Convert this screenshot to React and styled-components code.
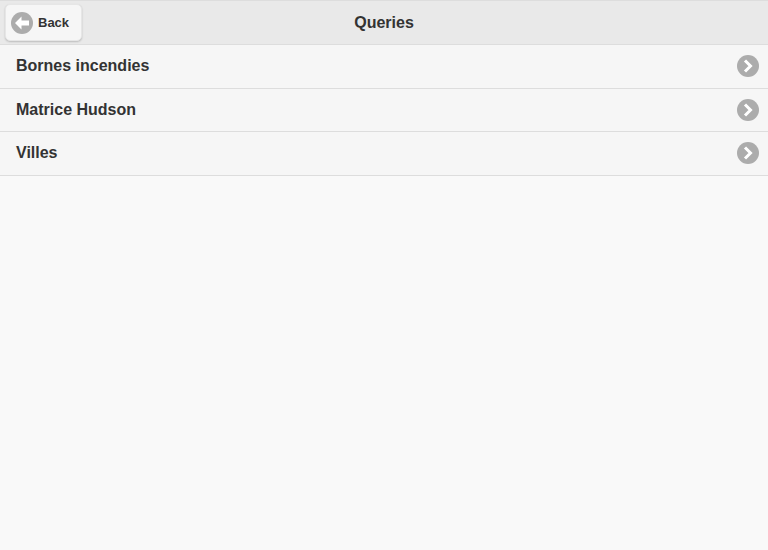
import React from "react";
import styled, { createGlobalStyle } from "styled-components";

const queries = ["Bornes incendies", "Matrice Hudson", "Villes"];

const GlobalStyle = createGlobalStyle`
  html, body {
    margin: 0;
    height: 100%;
    background: #f9f9f9;
  }
  body {
    font-family: "Liberation Sans", Arial, sans-serif;
    color: #333;
  }
`;

const Page = styled.div`
  min-height: 550px;
  background: #f9f9f9;
`;

const Header = styled.header`
  position: relative;
  height: 43px;
  display: flex;
  align-items: center;
  justify-content: center;
  background: #e9e9e9;
  border-top: 1px solid #dddddd;
  border-bottom: 1px solid #dddddd;
`;

const Title = styled.h1`
  margin: 0;
  font-size: 16px;
  font-weight: 700;
  line-height: 20px;
  color: #333;
`;

const BackButton = styled.a`
  position: absolute;
  left: 5px;
  top: 3px;
  width: 77px;
  height: 37px;
  box-sizing: border-box;
  display: flex;
  align-items: center;
  gap: 5px;
  padding-left: 5px;
  background: #f6f6f6;
  border: 1px solid #e6e6e6;
  border-radius: 5px;
  box-shadow: 0 1px 2px rgba(0, 0, 0, 0.2);
  font-size: 13px;
  font-weight: 700;
  color: #333;
`;

const Disc = styled.svg`
  display: block;
  flex: none;
  width: 22px;
  height: 22px;
`;

const List = styled.ul`
  margin: 0;
  padding: 0;
  list-style: none;
`;

const Row = styled.li`
  height: 43.6px;
  box-sizing: border-box;
  display: flex;
  align-items: center;
  justify-content: space-between;
  padding: 0 9px 0 16px;
  background: #f6f6f6;
  border-bottom: 1px solid #dddddd;
  font-size: 16px;
  font-weight: 700;
  color: #333;
`;

const BackIcon = () => (
  <Disc viewBox="0 0 22 22">
    <circle cx="11" cy="11" r="11" fill="#acacac" />
    <path d="M10.5 4.5 L4 11 L10.5 17.5 V13.5 H18 V8.5 H10.5 Z" fill="#fff" />
  </Disc>
);

const ChevronIcon = () => (
  <Disc viewBox="0 0 22 22">
    <circle cx="11" cy="11" r="11" fill="#acacac" />
    <path d="M8 5.5 L13.5 11 L8 16.5" fill="none" stroke="#fff" strokeWidth="3" />
  </Disc>
);

export default function App() {
  return (
    <Page>
      <GlobalStyle />
      <Header>
        <BackButton>
          <BackIcon />
          Back
        </BackButton>
        <Title>Queries</Title>
      </Header>
      <List>
        {queries.map((name) => (
          <Row key={name}>
            {name}
            <ChevronIcon />
          </Row>
        ))}
      </List>
    </Page>
  );
}
